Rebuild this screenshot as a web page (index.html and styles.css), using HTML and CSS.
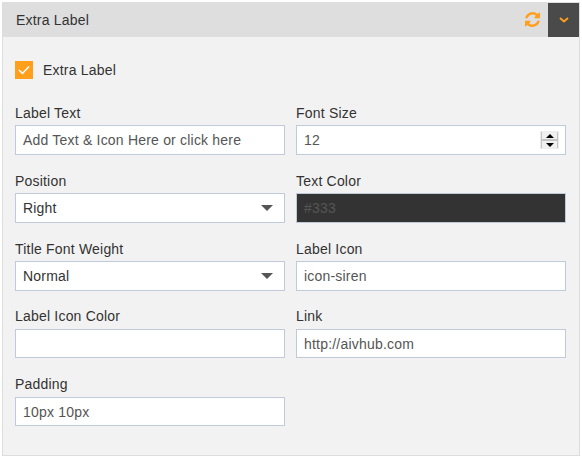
FILE: index.html
```html
<!DOCTYPE html>
<html lang="en">
<head>
<meta charset="UTF-8">
<title>Extra Label</title>
<link rel="stylesheet" href="styles.css">
</head>
<body>

<div class="panel">
  <div class="panel-head">
    <span class="panel-title">Extra Label</span>
    <svg class="refresh-icon" width="15" height="15" viewBox="128 128 1536 1536">
      <path fill="#ff9f1c" d="M1639 1056q0 5-1 7-64 268-268 434.5t-478 166.5q-146 0-282.5-55t-243.5-157l-129 129q-19 19-45 19t-45-19-19-45v-448q0-26 19-45t45-19h448q26 0 45 19t19 45-19 45l-137 137q71 66 161 102t187 36q134 0 250-65t186-179q11-17 53-117 8-23 30-23h192q13 0 22.5 9.5t9.5 22.5zm25-800v448q0 26-19 45t-45 19h-448q-26 0-45-19t-19-45 19-45l138-138q-148-137-349-137-134 0-250 65t-186 179q-11 17-53 117-8 23-30 23h-199q-13 0-22.5-9.5t-9.5-22.5v-7q65-268 270-434.5t480-166.5q146 0 284 55.5t245 156.5l130-129q19-19 45-19t45 19 19 45z"/>
    </svg>
    <div class="toggle-btn">
      <svg width="10" height="6" viewBox="0 0 10 6"><path d="M1 1l4 3.4L9 1" fill="none" stroke="#ff9f1c" stroke-width="2"/></svg>
    </div>
  </div>

  <div class="panel-body">
    <label class="check-row">
      <span class="check-box">
        <svg width="12" height="10" viewBox="0 0 12 10"><path d="M1 5l3.4 3.4L11 1.4" fill="none" stroke="#fff" stroke-width="1.5"/></svg>
      </span>
      Extra Label
    </label>

    <div class="form-grid">
      <div class="field">
        <label>Label Text</label>
        <div class="control">Add Text &amp; Icon Here or click here</div>
      </div>
      <div class="field">
        <label>Font Size</label>
        <div class="control">
          12
          <span class="spinner">
            <span class="spin-btn"><i class="arrow-up"></i></span>
            <span class="spin-btn"><i class="arrow-down"></i></span>
          </span>
        </div>
      </div>
      <div class="field">
        <label>Position</label>
        <div class="control control-select">Right<i class="caret"></i></div>
      </div>
      <div class="field">
        <label>Text Color</label>
        <div class="control control-color">#333</div>
      </div>
      <div class="field">
        <label>Title Font Weight</label>
        <div class="control control-select">Normal<i class="caret"></i></div>
      </div>
      <div class="field">
        <label>Label Icon</label>
        <div class="control">icon-siren</div>
      </div>
      <div class="field">
        <label>Label Icon Color</label>
        <div class="control"></div>
      </div>
      <div class="field">
        <label>Link</label>
        <div class="control">http://aivhub.com</div>
      </div>
      <div class="field">
        <label>Padding</label>
        <div class="control">10px 10px</div>
      </div>
    </div>
  </div>
</div>

</body>
</html>
```

FILE: styles.css
```css
html, body {
  margin: 0;
  padding: 0;
  background: #fff;
}

body {
  padding: 2px 2px 0;
  font-family: "Liberation Sans", Arial, sans-serif;
  font-size: 14px;
  letter-spacing: 0.2px;
  color: #333;
}

.panel {
  box-sizing: border-box;
  width: 578px;
  height: 454px;
  background: #f2f2f2;
  border: 1px solid #ddd;
  border-top: 0;
}

.panel-head {
  display: flex;
  align-items: center;
  height: 35px;
  background: #dedede;
  padding-left: 13px;
}

.panel-title {
  flex: 1;
}

.refresh-icon {
  margin-right: 8px;
}

.toggle-btn {
  display: flex;
  align-items: center;
  justify-content: center;
  width: 31px;
  height: 34px;
  margin-top: 1px;
  background: #4a4a4a;
}

.panel-body {
  padding: 24px 12px 0;
}

.check-row {
  display: flex;
  align-items: center;
  gap: 10px;
  height: 18px;
}

.check-box {
  display: flex;
  align-items: center;
  justify-content: center;
  width: 18px;
  height: 18px;
  background: #ff9f1c;
}

.form-grid {
  display: grid;
  grid-template-columns: 270px 270px;
  column-gap: 11px;
  row-gap: 17.85px;
  margin-top: 25.75px;
}

.field label {
  display: block;
  height: 20.25px;
  line-height: 16px;
}

.control {
  position: relative;
  box-sizing: border-box;
  height: 29.8px;
  line-height: 29px;
  padding: 0 7px;
  background: #fff;
  border: 1px solid #bfcbd9;
  color: #555;
}

.control-select {
  color: #333;
}

.control-color {
  background: #333;
  color: #555;
}

.caret {
  position: absolute;
  right: 11px;
  top: 11px;
  border-left: 6px solid transparent;
  border-right: 6px solid transparent;
  border-top: 6px solid #555;
}

.spinner {
  position: absolute;
  right: 6px;
  top: 5px;
  display: flex;
  flex-direction: column;
  gap: 2px;
  width: 17px;
  height: 16px;
  background: #c4c4c4;
  border: 1px solid #ececec;
}

.spin-btn {
  flex: 1;
  display: flex;
  align-items: center;
  justify-content: center;
  margin: 0 1px;
  background: #f0f0f0;
}

.arrow-up {
  border-left: 4px solid transparent;
  border-right: 4px solid transparent;
  border-bottom: 4px solid #000;
}

.arrow-down {
  border-left: 4px solid transparent;
  border-right: 4px solid transparent;
  border-top: 4px solid #000;
}
```
